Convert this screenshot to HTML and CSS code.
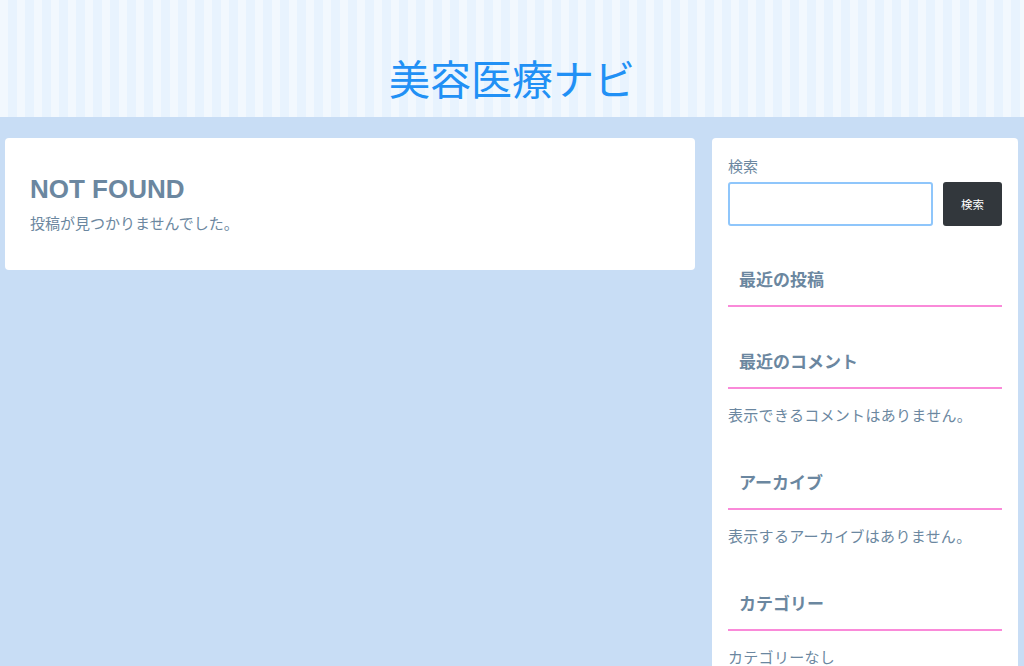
FILE: index.html
```html
<!DOCTYPE html>
<html lang="ja">
<head>
<meta charset="utf-8">
<title>美容医療ナビ</title>
<link rel="stylesheet" href="styles.css">
</head>
<body>
<header class="site-header">
  <h1 class="site-title">美容医療ナビ</h1>
</header>
<div class="layout">
  <main class="content-card">
    <h2 class="page-title">NOT FOUND</h2>
    <p class="page-text">投稿が見つかりませんでした。</p>
  </main>
  <aside class="sidebar">
    <div class="widget-search">
      <label class="search-label">検索</label>
      <div class="search-row">
        <input class="search-input" type="text">
        <button class="search-button">検索</button>
      </div>
    </div>
    <section class="widget">
      <h3 class="widget-title">最近の投稿</h3>
    </section>
    <section class="widget">
      <h3 class="widget-title">最近のコメント</h3>
      <p class="widget-text">表示できるコメントはありません。</p>
    </section>
    <section class="widget">
      <h3 class="widget-title">アーカイブ</h3>
      <p class="widget-text">表示するアーカイブはありません。</p>
    </section>
    <section class="widget">
      <h3 class="widget-title">カテゴリー</h3>
      <p class="widget-text">カテゴリーなし</p>
    </section>
  </aside>
</div>
</body>
</html>
```
FILE: styles.css
```css
* { box-sizing: border-box; }
html, body { margin: 0; padding: 0; }
body {
  background: #c8ddf5;
  font-family: "Liberation Sans", "Noto Sans CJK JP", sans-serif;
  color: #6b87a0;
  height: 666px;
  overflow: hidden;
}
.site-header {
  height: 117px;
  padding-top: 57px;
  background: repeating-linear-gradient(90deg, #f2f8fe 0 8.5px, #e8f3fe 8.5px 17px);
}
.site-title {
  margin: 0;
  text-align: center;
  font-family: "Noto Sans CJK JP", sans-serif;
  font-weight: 400;
  font-size: 41px;
  line-height: 41px;
  color: #2190f5;
}
.layout {
  display: grid;
  grid-template-columns: 1fr 306px;
  gap: 17px;
  padding: 21px 6px 0 5px;
  align-items: start;
}
.content-card {
  background: #fff;
  border-radius: 4px;
  padding: 36px 25px 35px;
}
.page-title {
  margin: 0 0 8px;
  font-size: 26px;
  line-height: 31px;
  font-weight: 700;
  color: #6b87a0;
}
.page-text {
  margin: 0;
  font-size: 15px;
  line-height: 22px;
}
.sidebar {
  display: flex;
  flex-direction: column;
  background: #fff;
  border-radius: 4px 4px 0 0;
  padding: 19px 16px 40px;
  min-height: 600px;
}
.search-label {
  display: block;
  font-size: 15px;
  line-height: 20px;
}
.search-row {
  display: flex;
  gap: 10px;
  margin-top: 5px;
}
.search-input {
  flex: 1;
  height: 44px;
  border: 2px solid #8fc6fb;
  border-radius: 3px;
  background: #fff;
  outline: none;
}
.search-button {
  width: 59px;
  height: 44px;
  border: none;
  border-radius: 3px;
  background: #32373c;
  color: #fff;
  font-family: "Noto Sans CJK JP", sans-serif;
  font-size: 11.5px;
  padding: 0;
}
.widget {
  display: flex;
  flex-direction: column;
  margin-top: 44px;
}
.widget-search + .widget { margin-top: 43px; }
.widget-title {
  margin: 0;
  padding: 0 11px 12px;
  font-size: 17px;
  line-height: 24px;
  font-weight: 700;
  border-bottom: 2px solid #fa8ad9;
}
.widget-text {
  margin: 16px 0 1px;
  font-size: 15px;
  line-height: 22px;
  letter-spacing: 0.3px;
}
```
